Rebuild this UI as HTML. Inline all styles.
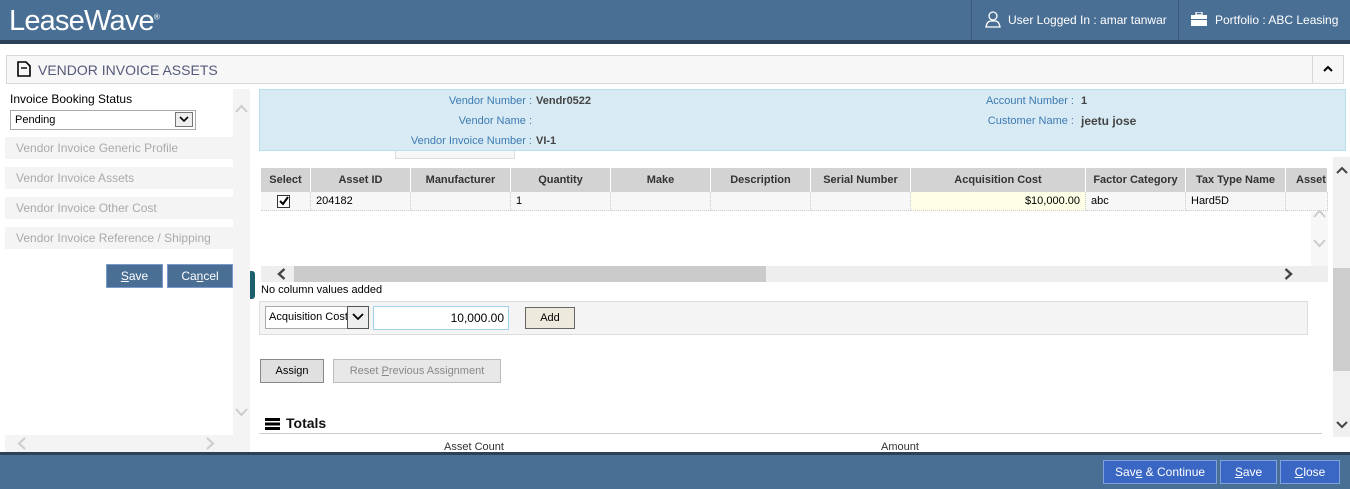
<!DOCTYPE html>
<html><head><meta charset="utf-8"><style>
*{box-sizing:border-box;margin:0;padding:0}
body{width:1350px;height:489px;overflow:hidden;background:#fff;font-family:"Liberation Sans",Arial,sans-serif;font-size:12px;color:#000;position:relative}
.a{position:absolute}
.hdr{left:0;top:0;width:1350px;height:40px;background:#4a6f95}
.hdr2{left:0;top:40px;width:1350px;height:4px;background:#2b4157}
.logo{left:9px;top:5px;color:#fff;font-size:29px;letter-spacing:-0.8px}
.top{color:#fff;font-size:12px;top:13px}
.sep{top:0;width:1px;height:40px;background:#3a5a7c}
.ph{left:6px;top:55px;width:1338px;height:29px;background:#f7f7f7;border:1px solid #d8d8d8}
.nav{left:5px;width:228px;height:22px;background:#f4f4f4;color:#aaa;font-size:12px;padding:4px 11px}
.btn{background:#4a6f95;border:1px solid #7b9acb;color:#fff;text-align:center;font-size:12px;height:24px;line-height:22px}
.info{left:259px;top:89px;width:1087px;height:62px;background:#d8ebf5;border:1px solid #b6e0ec}
.lbl{color:#3e7ab1;font-size:11px;text-align:right}
.val{color:#444;font-weight:bold;font-size:11px}
.th{top:168px;height:24px;background:#d3d3d3;border-right:1px solid #fff;font-weight:bold;font-size:11px;color:#333;text-align:center;line-height:24px}
.td{top:192px;height:19px;background:#f7f7f7;border-right:1px dotted #ccc;border-bottom:1px dotted #ccc;font-size:11px;line-height:19px;padding:0 5px}
.fbtn{top:460px;height:24px;background:#3a66c4;border:1px solid #7ea2e0;color:#fff;text-align:center;line-height:22px;font-size:12px}
</style></head><body>
<div class="a hdr"></div><div class="a hdr2"></div>
<div class="a logo">LeaseWave<sup style="font-size:8px">®</sup></div>
<div class="a sep" style="left:971px"></div><div class="a sep" style="left:1178px"></div>
<svg class="a" style="left:985px;top:11px" width="16" height="17" viewBox="0 0 16 17"><circle cx="8" cy="5" r="4" fill="none" stroke="#fff" stroke-width="1.3"/><path d="M1 16 Q2 10 6 10 L10 10 Q14 10 15 16 Z" fill="none" stroke="#fff" stroke-width="1.3"/></svg>
<div class="a top" style="left:1008px">User Logged In : amar tanwar</div>
<svg class="a" style="left:1191px;top:12px" width="16" height="14" viewBox="0 0 16 14"><rect x="5" y="0" width="6" height="3" fill="none" stroke="#fff" stroke-width="1.3"/><rect x="0" y="3" width="16" height="4" fill="#fff"/><rect x="0" y="8" width="16" height="6" fill="#fff"/></svg>
<div class="a top" style="left:1215px">Portfolio : ABC Leasing</div>

<div class="a ph"></div>
<svg class="a" style="left:17px;top:61px" width="14" height="16" viewBox="0 0 14 16"><path d="M1 1 H9 L13 5 V15 H1 Z" fill="none" stroke="#000" stroke-width="1.6"/><path d="M4 7 H10" stroke="#000" stroke-width="1.4"/></svg>
<div class="a" style="left:38px;top:62px;font-size:14px;color:#555a7a">VENDOR INVOICE ASSETS</div>
<div class="a" style="left:1312px;top:56px;width:1px;height:27px;background:#d8d8d8"></div>
<svg class="a" style="left:1322px;top:65px" width="12" height="8" viewBox="0 0 12 8"><path d="M2 6 L6 2 L10 6" fill="none" stroke="#000" stroke-width="2"/></svg>

<div class="a" style="left:10px;top:92px;font-size:12px">Invoice Booking Status</div>
<div class="a" style="left:10px;top:110px;width:186px;height:20px;border:1px solid #aaa;font-size:11px;padding:3px 4px">Pending</div>
<div class="a" style="left:175px;top:112px;width:18px;height:15px;border:1px solid #777;background:#eee"></div>
<svg class="a" style="left:179px;top:116px" width="10" height="7" viewBox="0 0 10 7"><path d="M1 1 L5 5 L9 1" fill="none" stroke="#000" stroke-width="1.6"/></svg>
<div class="a" style="left:233px;top:89px;width:17px;height:346px;background:#f4f4f4"></div>
<div class="a" style="left:5px;top:435px;width:245px;height:17px;background:#f4f4f4"></div>
<svg class="a" style="left:235px;top:104px" width="13" height="9" viewBox="0 0 13 9"><path d="M1 8 L6.5 2 L12 8" fill="none" stroke="#ccc" stroke-width="2"/></svg>
<svg class="a" style="left:235px;top:408px" width="13" height="9" viewBox="0 0 13 9"><path d="M1 1 L6.5 7 L12 1" fill="none" stroke="#ccc" stroke-width="2"/></svg>
<svg class="a" style="left:17px;top:437px" width="9" height="13" viewBox="0 0 9 13"><path d="M8 1 L2 6.5 L8 12" fill="none" stroke="#ccc" stroke-width="2"/></svg>
<svg class="a" style="left:206px;top:437px" width="9" height="13" viewBox="0 0 9 13"><path d="M1 1 L7 6.5 L1 12" fill="none" stroke="#ccc" stroke-width="2"/></svg>
<div class="a nav" style="top:137px">Vendor Invoice Generic Profile</div>
<div class="a nav" style="top:167px">Vendor Invoice Assets</div>
<div class="a nav" style="top:197px">Vendor Invoice Other Cost</div>
<div class="a nav" style="top:227px">Vendor Invoice Reference / Shipping</div>
<div class="a btn" style="left:106px;top:264px;width:57px"><u>S</u>ave</div>
<div class="a btn" style="left:167px;top:264px;width:66px">Ca<u>n</u>cel</div>

<div class="a info"></div>
<div class="a lbl" style="left:360px;top:95px;width:172px">Vendor Number :</div><div class="a val" style="left:536px;top:95px">Vendr0522</div>
<div class="a lbl" style="left:360px;top:115px;width:172px">Vendor Name :</div>
<div class="a lbl" style="left:360px;top:135px;width:172px">Vendor Invoice Number :</div><div class="a val" style="left:536px;top:135px">VI-1</div>
<div class="a lbl" style="left:900px;top:95px;width:174px">Account Number :</div><div class="a val" style="left:1081px;top:95px">1</div>
<div class="a lbl" style="left:900px;top:115px;width:174px">Customer Name :</div><div class="a val" style="left:1081px;top:114px;font-size:12px">jeetu jose</div>
<div class="a" style="left:395px;top:151px;width:120px;height:8px;border:1px solid #ddd;border-top:none;background:#f7f7f7"></div>

<div class="a th" style="left:261px;width:50px">Select</div>
<div class="a th" style="left:311px;width:100px">Asset ID</div>
<div class="a th" style="left:411px;width:100px">Manufacturer</div>
<div class="a th" style="left:511px;width:100px">Quantity</div>
<div class="a th" style="left:611px;width:100px">Make</div>
<div class="a th" style="left:711px;width:100px">Description</div>
<div class="a th" style="left:811px;width:100px">Serial Number</div>
<div class="a th" style="left:911px;width:175px">Acquisition Cost</div>
<div class="a th" style="left:1086px;width:100px">Factor Category</div>
<div class="a th" style="left:1186px;width:100px">Tax Type Name</div>
<div class="a th" style="left:1286px;width:42px;text-align:left;padding-left:10px;overflow:hidden">Asset</div>
<div class="a td" style="left:261px;width:50px"></div>
<div class="a" style="left:277px;top:195px;width:13px;height:13px;border:1px solid #333;background:#fff"></div>
<svg class="a" style="left:278px;top:195px" width="12" height="12" viewBox="0 0 12 12"><path d="M2 6 L5 9 L10 2" fill="none" stroke="#000" stroke-width="2"/></svg>
<div class="a td" style="left:311px;width:100px">204182</div>
<div class="a td" style="left:411px;width:100px"></div>
<div class="a td" style="left:511px;width:100px">1</div>
<div class="a td" style="left:611px;width:100px"></div>
<div class="a td" style="left:711px;width:100px"></div>
<div class="a td" style="left:811px;width:100px"></div>
<div class="a td" style="left:911px;width:175px;background:#ffffe8;text-align:right">$10,000.00</div>
<div class="a td" style="left:1086px;width:100px">abc</div>
<div class="a td" style="left:1186px;width:100px">Hard5D</div>
<div class="a td" style="left:1286px;width:42px"></div>
<div class="a" style="left:1311px;top:211px;width:17px;height:55px;background:#f7f7f7"></div>
<svg class="a" style="left:1313px;top:209px" width="13" height="9" viewBox="0 0 13 9"><path d="M1 8 L6.5 2 L12 8" fill="none" stroke="#ccc" stroke-width="2"/></svg>
<svg class="a" style="left:1313px;top:239px" width="13" height="9" viewBox="0 0 13 9"><path d="M1 1 L6.5 7 L12 1" fill="none" stroke="#ccc" stroke-width="2"/></svg>
<div class="a" style="left:261px;top:266px;width:1067px;height:16px;background:#eee"></div>
<div class="a" style="left:294px;top:266px;width:472px;height:16px;background:#cbcbcb"></div>
<svg class="a" style="left:277px;top:268px" width="9" height="12" viewBox="0 0 9 12"><path d="M7.5 1 L2 6 L7.5 11" fill="none" stroke="#444" stroke-width="2.4"/></svg>
<svg class="a" style="left:1284px;top:268px" width="9" height="12" viewBox="0 0 9 12"><path d="M1.5 1 L7 6 L1.5 11" fill="none" stroke="#444" stroke-width="2.4"/></svg>
<div class="a" style="left:250px;top:271px;width:5px;height:28px;background:#1e5f6e;border-radius:0 3px 3px 0"></div>
<div class="a" style="left:261px;top:284px;font-size:11px">No column values added</div>

<div class="a" style="left:259px;top:301px;width:1049px;height:34px;background:#f4f4f4;border:1px solid #ddd"></div>
<div class="a" style="left:265px;top:306px;width:104px;height:23px;border:1px solid #aaa;background:#fff;font-size:11px;padding:4px 3px;overflow:hidden;white-space:nowrap">Acquisition Cost</div>
<div class="a" style="left:347px;top:306px;width:22px;height:23px;border:1px solid #555;background:#eee"></div>
<svg class="a" style="left:352px;top:313px" width="12" height="8" viewBox="0 0 12 8"><path d="M1 1 L6 6 L11 1" fill="none" stroke="#000" stroke-width="1.8"/></svg>
<div class="a" style="left:373px;top:306px;width:136px;height:24px;border:1px solid #9fd0ea;background:#fff;font-size:12px;text-align:right;padding:4px 4px">10,000.00</div>
<div class="a" style="left:525px;top:307px;width:50px;height:22px;border:1px solid #666;background:#ede9dc;text-align:center;line-height:20px;font-size:11px">Add</div>
<div class="a" style="left:260px;top:359px;width:64px;height:24px;border:1px solid #888;background:#e0e0e0;text-align:center;line-height:22px;font-size:11px">Assi<u>g</u>n</div>
<div class="a" style="left:333px;top:359px;width:168px;height:24px;border:1px solid #bbb;background:#e8e8e8;color:#888;text-align:center;line-height:22px;font-size:11px">Reset <u>P</u>revious Assignment</div>

<svg class="a" style="left:265px;top:418px" width="15" height="12" viewBox="0 0 15 12"><rect y="0" width="15" height="3" fill="#000"/><rect y="4.5" width="15" height="3" fill="#000"/><rect y="9" width="15" height="3" fill="#000"/></svg>
<div class="a" style="left:286px;top:415px;font-size:14px;font-weight:bold;color:#111">Totals</div>
<div class="a" style="left:259px;top:433px;width:1063px;height:1px;background:#ccc"></div>
<div class="a" style="left:444px;top:441px;font-size:11px;color:#333">Asset Count</div>
<div class="a" style="left:881px;top:441px;font-size:11px;color:#333">Amount</div>

<div class="a" style="left:1333px;top:157px;width:17px;height:280px;background:#f0f0f0"></div>
<div class="a" style="left:1333px;top:268px;width:17px;height:103px;background:#cdcdcd"></div>
<svg class="a" style="left:1336px;top:166px" width="12" height="8" viewBox="0 0 12 8"><path d="M1 7 L6 2 L11 7" fill="none" stroke="#444" stroke-width="2"/></svg>
<svg class="a" style="left:1336px;top:421px" width="12" height="8" viewBox="0 0 12 8"><path d="M1 1 L6 6 L11 1" fill="none" stroke="#444" stroke-width="2"/></svg>

<div class="a" style="left:0;top:452px;width:1350px;height:3px;background:#2b4157"></div>
<div class="a" style="left:0;top:455px;width:1350px;height:34px;background:#4a6f95"></div>
<div class="a fbtn" style="left:1103px;width:114px">Sav<u>e</u> &amp; Continue</div>
<div class="a fbtn" style="left:1220px;width:57px"><u>S</u>ave</div>
<div class="a fbtn" style="left:1280px;width:60px"><u>C</u>lose</div>
</body></html>
